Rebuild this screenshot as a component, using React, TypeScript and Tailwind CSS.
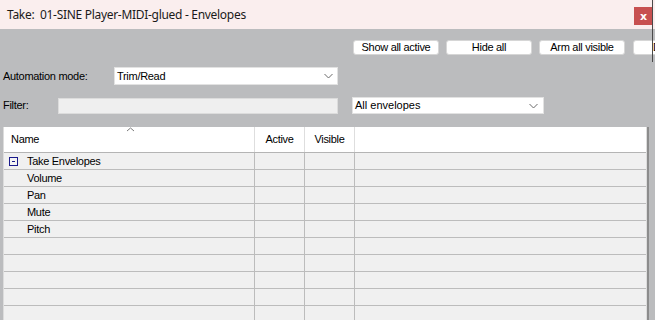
import React from "react";

function Chevron() {
  return (
    <svg width="9" height="6" viewBox="0 0 9 6" className="shrink-0">
      <polyline points="0.5,1 4.5,5 8.5,1" fill="none" stroke="#6a6a6a" strokeWidth="1" />
    </svg>
  );
}

export default function App() {
  const rows: { name: string; kind: "parent" | "child" | "empty" }[] = [
    { name: "Take Envelopes", kind: "parent" },
    { name: "Volume", kind: "child" },
    { name: "Pan", kind: "child" },
    { name: "Mute", kind: "child" },
    { name: "Pitch", kind: "child" },
    { name: "", kind: "empty" },
    { name: "", kind: "empty" },
    { name: "", kind: "empty" },
    { name: "", kind: "empty" },
    { name: "", kind: "empty" },
    { name: "", kind: "empty" },
  ];
  const body = "font-['Liberation_Sans',Arial,sans-serif] text-[11px] tracking-[-0.3px] text-black";
  return (
    <div className={`relative w-[655px] h-[320px] overflow-hidden bg-[#bbbcbe] ${body}`}>
      {/* title bar */}
      <div className="h-[29px] bg-[#faeeee] flex items-start justify-between">
        <span className="pl-[7px] pt-[6px] font-['Noto_Sans',sans-serif] text-[12px] tracking-[-0.3px] leading-[17px] text-[#1a1a1a]">
          Take:&nbsp; 01-SINE Player-MIDI-glued - Envelopes
        </span>
        <div className="mt-[7px] mr-[2px] w-[19px] h-[18px] bg-[#c75050] flex items-center justify-center text-white font-bold text-[11px] leading-none font-['DejaVu_Sans',sans-serif] tracking-normal">
          x
        </div>
      </div>

      {/* button row */}
      <div className="mt-[11px] h-[15px] flex gap-[7px] pl-[353px] whitespace-nowrap">
        {["Show all active", "Hide all", "Arm all visible", "Disarm all"].map((b, i) => (
          <div
            key={b}
            className={`shrink-0 w-[86px] h-[15px] bg-white rounded-[3px] border border-[#d6d6d6] flex items-center justify-center leading-none ${i === 3 ? "ml-[1px]" : ""}`}
          >
            {b}
          </div>
        ))}
      </div>

      {/* automation mode */}
      <div className="mt-[12px] flex items-center pl-[3px]">
        <span className="w-[111px] shrink-0">Automation mode:</span>
        <div className="w-[224px] h-[18px] bg-white border border-[#e2e2e2] flex items-center justify-between pl-[2px] pr-[4px]">
          <span>Trim/Read</span>
          <Chevron />
        </div>
      </div>

      {/* filter row */}
      <div className="mt-[12px] flex items-start pl-[3px]">
        <span className="w-[55px] shrink-0 h-[17px] flex items-center">Filter:</span>
        <div className="mt-[1px] w-[280px] h-[16px] bg-[#efefef] border border-[#dcdcdc]" />
        <div className="ml-[14px] w-[192px] h-[17px] bg-white border border-[#e2e2e2] flex items-center justify-between pl-[2px] pr-[5px]">
          <span className="tracking-[0px]">All envelopes</span>
          <Chevron />
        </div>
      </div>

      {/* table */}
      <div className="mt-[13px] ml-[3px] w-[646px] border-r-2 border-[#8c8c8c]">
        <div className="border-l border-r border-[#dcdcdc]">
          {/* header */}
          <div className="relative h-[26px] bg-white border-b border-[#b4b4b4] flex">
            <div className="w-[251px] shrink-0 border-r border-[#dedede] flex items-center pl-[7px]">Name</div>
            <div className="w-[50px] shrink-0 border-r border-[#dedede] flex items-center justify-center">Active</div>
            <div className="w-[50px] shrink-0 border-r border-[#dedede] flex items-center justify-center">Visible</div>
            <div className="flex-1" />
            <svg width="9" height="5" viewBox="0 0 9 5" className="absolute left-[122px] top-[0px]">
              <polyline points="1,4 4.5,1 8,4" fill="none" stroke="#7a7a7a" strokeWidth="1" />
            </svg>
          </div>
          {/* rows */}
          {rows.map((r, i) => (
            <div key={i} className="h-[17px] bg-[#f0f0f0] border-b border-[#bcbcbc] flex">
              <div className="w-[251px] shrink-0 border-r border-[#bcbcbc] flex items-center">
                {r.kind === "parent" && (
                  <div className="flex items-center pl-[5px] gap-[9px]">
                    <div className="w-[9px] h-[9px] border border-[#1a1a8c] bg-[#f4f4f4] flex items-center justify-center">
                      <div className="w-[3px] h-[1px] bg-[#1a1a8c]" />
                    </div>
                    <span>{r.name}</span>
                  </div>
                )}
                {r.kind === "child" && <span className="pl-[23px]">{r.name}</span>}
              </div>
              <div className="w-[50px] shrink-0 border-r border-[#bcbcbc]" />
              <div className="w-[50px] shrink-0 border-r border-[#bcbcbc]" />
              <div className="flex-1" />
            </div>
          ))}
        </div>
      </div>

      {/* right edge line */}
      <div className="absolute left-[652px] top-0 w-[1px] h-[62px] bg-[#4a4a4a]" />
    </div>
  );
}
